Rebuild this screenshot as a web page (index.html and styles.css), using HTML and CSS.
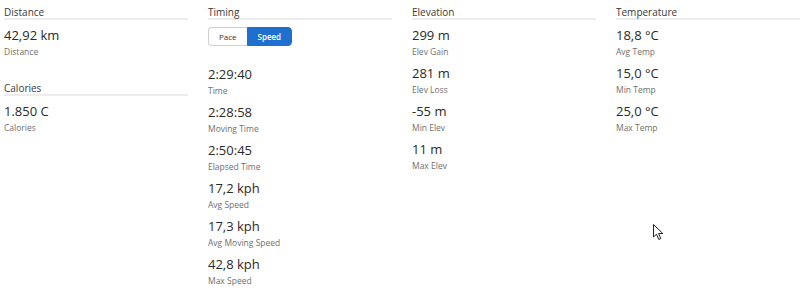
FILE: index.html
```html
<!DOCTYPE html>
<html lang="en">
<head>
    <meta charset="UTF-8">
    <meta name="viewport" content="width=device-width, initial-scale=1.0">
    <title>Activity Stats</title>
    <link rel="stylesheet" href="styles.css">
</head>
<body>
    <div class="stats-grid">
        <!-- Distance / Calories -->
        <div class="stats-column">
            <div class="stats-section">
                <h3 class="section-title">Distance</h3>
                <div class="stat">
                    <div class="stat-value">42,92 km</div>
                    <div class="stat-label">Distance</div>
                </div>
            </div>
            <div class="stats-section">
                <h3 class="section-title">Calories</h3>
                <div class="stat">
                    <div class="stat-value">1.850 C</div>
                    <div class="stat-label">Calories</div>
                </div>
            </div>
        </div>

        <!-- Timing -->
        <div class="stats-column">
            <div class="stats-section">
                <h3 class="section-title">Timing</h3>
                <div class="toggle">
                    <button class="toggle-btn">Pace</button>
                    <button class="toggle-btn active">Speed</button>
                </div>
                <div class="stat">
                    <div class="stat-value">2:29:40</div>
                    <div class="stat-label">Time</div>
                </div>
                <div class="stat">
                    <div class="stat-value">2:28:58</div>
                    <div class="stat-label">Moving Time</div>
                </div>
                <div class="stat">
                    <div class="stat-value">2:50:45</div>
                    <div class="stat-label">Elapsed Time</div>
                </div>
                <div class="stat">
                    <div class="stat-value">17,2 kph</div>
                    <div class="stat-label">Avg Speed</div>
                </div>
                <div class="stat">
                    <div class="stat-value">17,3 kph</div>
                    <div class="stat-label">Avg Moving Speed</div>
                </div>
                <div class="stat">
                    <div class="stat-value">42,8 kph</div>
                    <div class="stat-label">Max Speed</div>
                </div>
            </div>
        </div>

        <!-- Elevation -->
        <div class="stats-column">
            <div class="stats-section">
                <h3 class="section-title">Elevation</h3>
                <div class="stat">
                    <div class="stat-value">299 m</div>
                    <div class="stat-label">Elev Gain</div>
                </div>
                <div class="stat">
                    <div class="stat-value">281 m</div>
                    <div class="stat-label">Elev Loss</div>
                </div>
                <div class="stat">
                    <div class="stat-value">-55 m</div>
                    <div class="stat-label">Min Elev</div>
                </div>
                <div class="stat">
                    <div class="stat-value">11 m</div>
                    <div class="stat-label">Max Elev</div>
                </div>
            </div>
        </div>

        <!-- Temperature -->
        <div class="stats-column">
            <div class="stats-section">
                <h3 class="section-title">Temperature</h3>
                <div class="stat">
                    <div class="stat-value">18,8 °C</div>
                    <div class="stat-label">Avg Temp</div>
                </div>
                <div class="stat">
                    <div class="stat-value">15,0 °C</div>
                    <div class="stat-label">Min Temp</div>
                </div>
                <div class="stat">
                    <div class="stat-value">25,0 °C</div>
                    <div class="stat-label">Max Temp</div>
                </div>
            </div>
        </div>
    </div>

    <!-- mouse pointer captured in the screenshot -->
    <svg class="cursor" width="12" height="17" viewBox="0 0 12 17">
        <path d="M0.5 0.5 L0.5 13 L3.5 10.2 L5.8 15.5 L7.8 14.6 L5.6 9.5 L9.8 9.5 Z" fill="#fff" stroke="#222" stroke-width="1" stroke-linejoin="round"/>
    </svg>
</body>
</html>
```

FILE: styles.css
```css
body {
    font-family: "Open Sans", "Liberation Sans", sans-serif;
    margin: 0;
    background: #fff;
    color: #333;
}
.stats-grid {
    display: grid;
    grid-template-columns: repeat(4, 184px);
    column-gap: 20px;
    padding-left: 4px;
}
.stats-section + .stats-section {
    margin-top: 18px;
}
.section-title {
    margin: 0;
    padding-top: 6px;
    font-size: 10px;
    font-weight: normal;
    line-height: 12px;
    color: #3a3a3a;
    border-bottom: 2px solid #ececec;
}
.stat {
    margin-top: 7px;
    margin-bottom: 7px;
}
.stat + .stat {
    margin-top: 0;
}
.stat-value {
    font-size: 13px;
    line-height: 16px;
    color: #2a2a2a;
}
.stat-label {
    margin-top: 3px;
    font-size: 8.5px;
    line-height: 12px;
    color: #707070;
}
.toggle {
    display: flex;
    width: 84px;
    height: 19px;
    margin-top: 7px;
    margin-bottom: 20px;
}
.toggle-btn {
    flex: 39;
    padding: 0;
    font-family: inherit;
    font-size: 8px;
    color: #333;
    background: #fff;
    border: 1px solid #cfcfcf;
    border-right: none;
    border-radius: 4px 0 0 4px;
    cursor: pointer;
}
.toggle-btn.active {
    flex: 45;
    color: #fff;
    font-weight: 600;
    background: #1f6fcf;
    border: 1px solid #1f6fcf;
    border-radius: 0 4px 4px 0;
}
.cursor {
    position: absolute;
    left: 653px;
    top: 224px;
}
```
